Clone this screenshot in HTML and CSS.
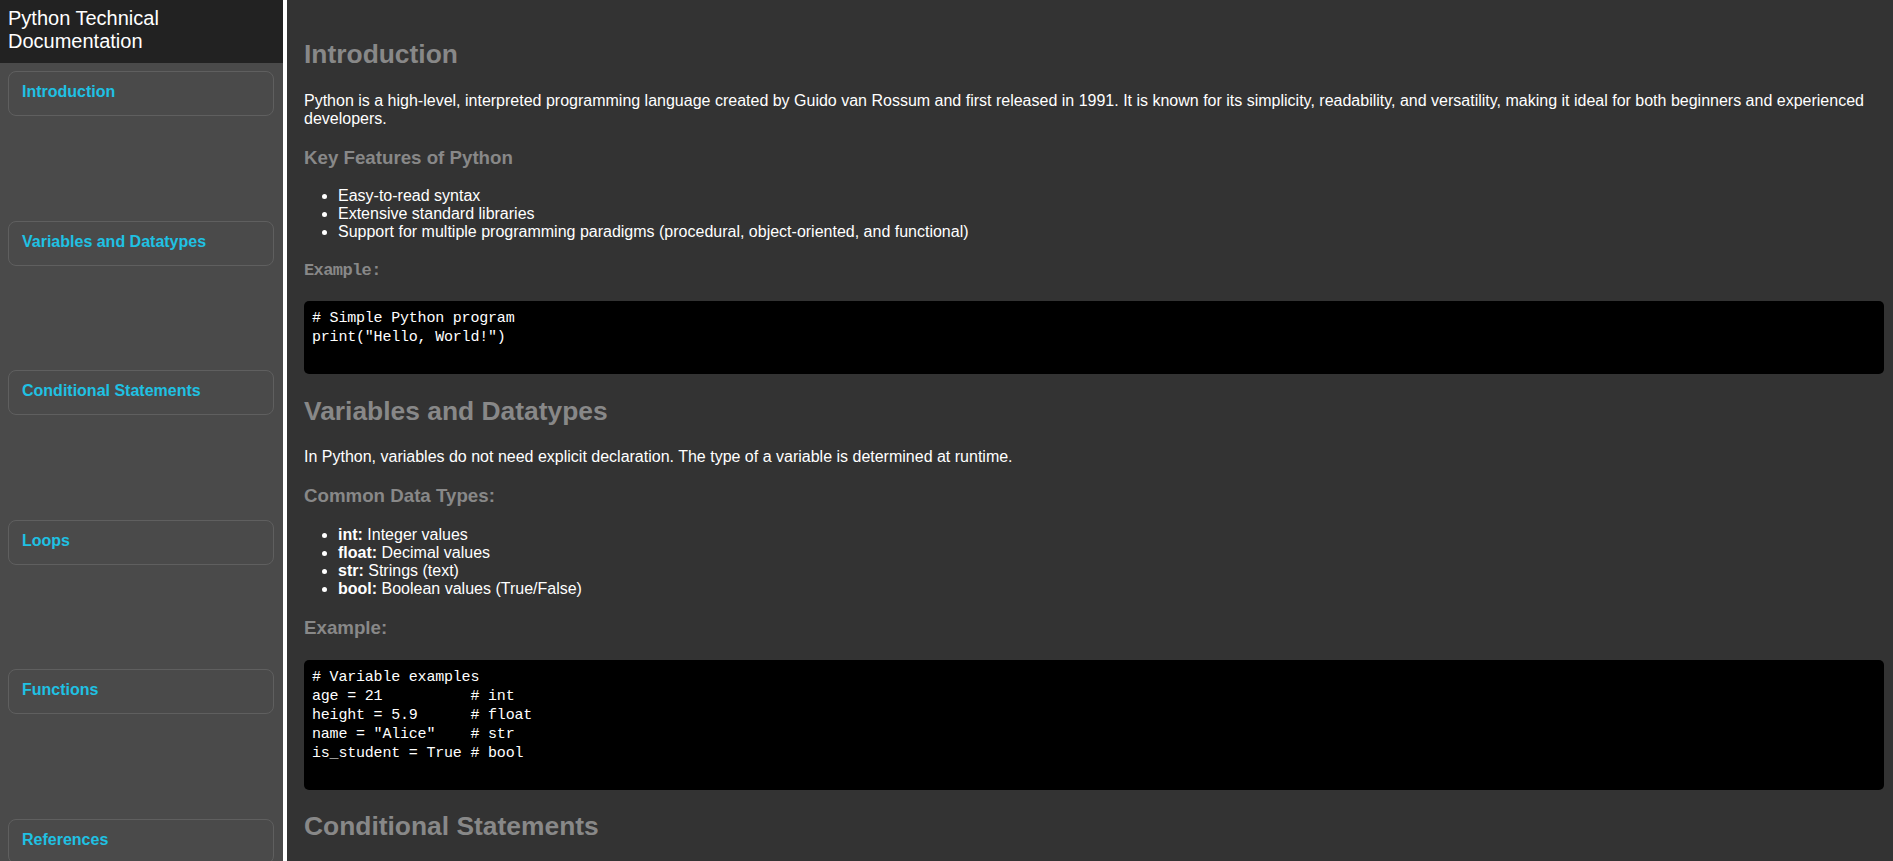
FILE: index.html
```html
<!DOCTYPE html>
<html lang="en">
<head>
<meta charset="utf-8">
<title>Python Technical Documentation</title>
<link rel="stylesheet" href="styles.css">
</head>
<body>
<nav class="sidebar" id="navbar">
  <header class="sidebar-header">Python Technical Documentation</header>
  <ul class="nav-list">
    <li><a class="nav-link" href="#Introduction">Introduction</a></li>
    <li><a class="nav-link" href="#Variables_and_Datatypes">Variables and Datatypes</a></li>
    <li><a class="nav-link" href="#Conditional_Statements">Conditional Statements</a></li>
    <li><a class="nav-link" href="#Loops">Loops</a></li>
    <li><a class="nav-link" href="#Functions">Functions</a></li>
    <li><a class="nav-link" href="#References">References</a></li>
  </ul>
</nav>
<main class="main-doc" id="main-doc">
  <section class="main-section" id="Introduction">
    <h2 class="section-title">Introduction</h2>
    <p>Python is a high-level, interpreted programming language created by Guido van Rossum and first released in 1991. It is known for its simplicity, readability, and versatility, making it ideal for both beginners and experienced developers.</p>
    <h3 class="sub-title">Key Features of Python</h3>
    <ul class="bullets">
      <li>Easy-to-read syntax</li>
      <li>Extensive standard libraries</li>
      <li>Support for multiple programming paradigms (procedural, object-oriented, and functional)</li>
    </ul>
    <h3 class="sub-title mono">Example:</h3>
    <pre class="code"><code># Simple Python program
print("Hello, World!")</code></pre>
  </section>

  <section class="main-section" id="Variables_and_Datatypes">
    <h2 class="section-title">Variables and Datatypes</h2>
    <p>In Python, variables do not need explicit declaration. The type of a variable is determined at runtime.</p>
    <h3 class="sub-title">Common Data Types:</h3>
    <ul class="bullets">
      <li><strong>int:</strong> Integer values</li>
      <li><strong>float:</strong> Decimal values</li>
      <li><strong>str:</strong> Strings (text)</li>
      <li><strong>bool:</strong> Boolean values (True/False)</li>
    </ul>
    <h3 class="sub-title">Example:</h3>
    <pre class="code"><code># Variable examples
age = 21          # int
height = 5.9      # float
name = "Alice"    # str
is_student = True # bool</code></pre>
  </section>

  <section class="main-section" id="Conditional_Statements">
    <h2 class="section-title">Conditional Statements</h2>
    <p>Conditional statements let a program execute different blocks of code depending on whether a condition is true or false.</p>
    <h3 class="sub-title">Example:</h3>
    <pre class="code"><code>age = 18
if age &gt;= 18:
    print("Adult")
else:
    print("Minor")</code></pre>
  </section>

  <section class="main-section" id="Loops">
    <h2 class="section-title">Loops</h2>
    <p>Python provides <strong>for</strong> and <strong>while</strong> loops to repeat a block of code.</p>
    <h3 class="sub-title">Example:</h3>
    <pre class="code"><code>for i in range(5):
    print(i)</code></pre>
  </section>

  <section class="main-section" id="Functions">
    <h2 class="section-title">Functions</h2>
    <p>Functions are defined with the <strong>def</strong> keyword and allow code to be reused.</p>
    <h3 class="sub-title">Example:</h3>
    <pre class="code"><code>def greet(name):
    return "Hello, " + name</code></pre>
  </section>

  <section class="main-section" id="References">
    <h2 class="section-title">References</h2>
    <ul class="bullets">
      <li>Official Python Documentation</li>
      <li>Python Tutorial</li>
    </ul>
  </section>
</main>
</body>
</html>
```
FILE: styles.css
```css
html {
  scrollbar-width: none;
}
html::-webkit-scrollbar,
.main-doc::-webkit-scrollbar {
  display: none;
}

body {
  margin: 0;
  height: 100vh;
  display: flex;
  background: #333333;
  font-family: "Liberation Sans", Arial, sans-serif;
  font-size: 16px;
  color: #ffffff;
}

/* Sidebar */
.sidebar {
  flex: 0 0 283px;
  height: 100vh;
  overflow: hidden;
  background: #4a4a4a;
  border-right: 4px solid #ffffff;
  display: flex;
  flex-direction: column;
}

.sidebar-header {
  flex: 0 0 63px;
  box-sizing: border-box;
  height: 63px;
  padding: 7px 8px 0;
  background: #222222;
  color: #ffffff;
  font-size: 20px;
  line-height: 23px;
}

.nav-list {
  list-style: none;
  margin: 0;
  padding: 8px 9px 0 8px;
  display: flex;
  flex-direction: column;
  gap: 104.6px;
}

.nav-link {
  display: block;
  box-sizing: border-box;
  height: 45px;
  padding: 11px 13px;
  border: 1px solid #5f5f5f;
  border-radius: 8px;
  color: #1fc1e3;
  font-weight: bold;
  font-size: 16px;
  text-decoration: none;
}

/* Main */
.main-doc {
  flex: 1;
  min-width: 0;
  height: 100vh;
  overflow-y: auto;
  scrollbar-width: none;
  box-sizing: border-box;
  padding: 17px 9px 17px 17px;
}

.section-title {
  font-size: 26.4px;
  margin: 21.9px 0;
  color: #888888;
  font-weight: bold;
}

.main-section p {
  margin: 16px 0;
}

.sub-title {
  font-size: 18.72px;
  margin: 18.72px 0;
  color: #888888;
  font-weight: bold;
}

.sub-title.mono {
  font-family: "Liberation Mono", "DejaVu Sans Mono", monospace;
  font-size: 17px;
  line-height: 22px;
  letter-spacing: -0.6px;
}

.bullets {
  margin: 16px 0;
  padding-left: 34px;
}

.code {
  margin: 16px 0;
  padding: 8px 8px 27px;
  background: #000000;
  border-radius: 5px;
  color: #ffffff;
  font-family: "Liberation Mono", "DejaVu Sans Mono", monospace;
  font-size: 15px;
  line-height: 19px;
  letter-spacing: -0.2px;
  overflow-x: auto;
}

.sub-title + .code {
  margin-top: 21px;
}

.sub-title.mono + .code {
  margin-top: 18.72px;
}

.code code {
  font-family: inherit;
}
```
